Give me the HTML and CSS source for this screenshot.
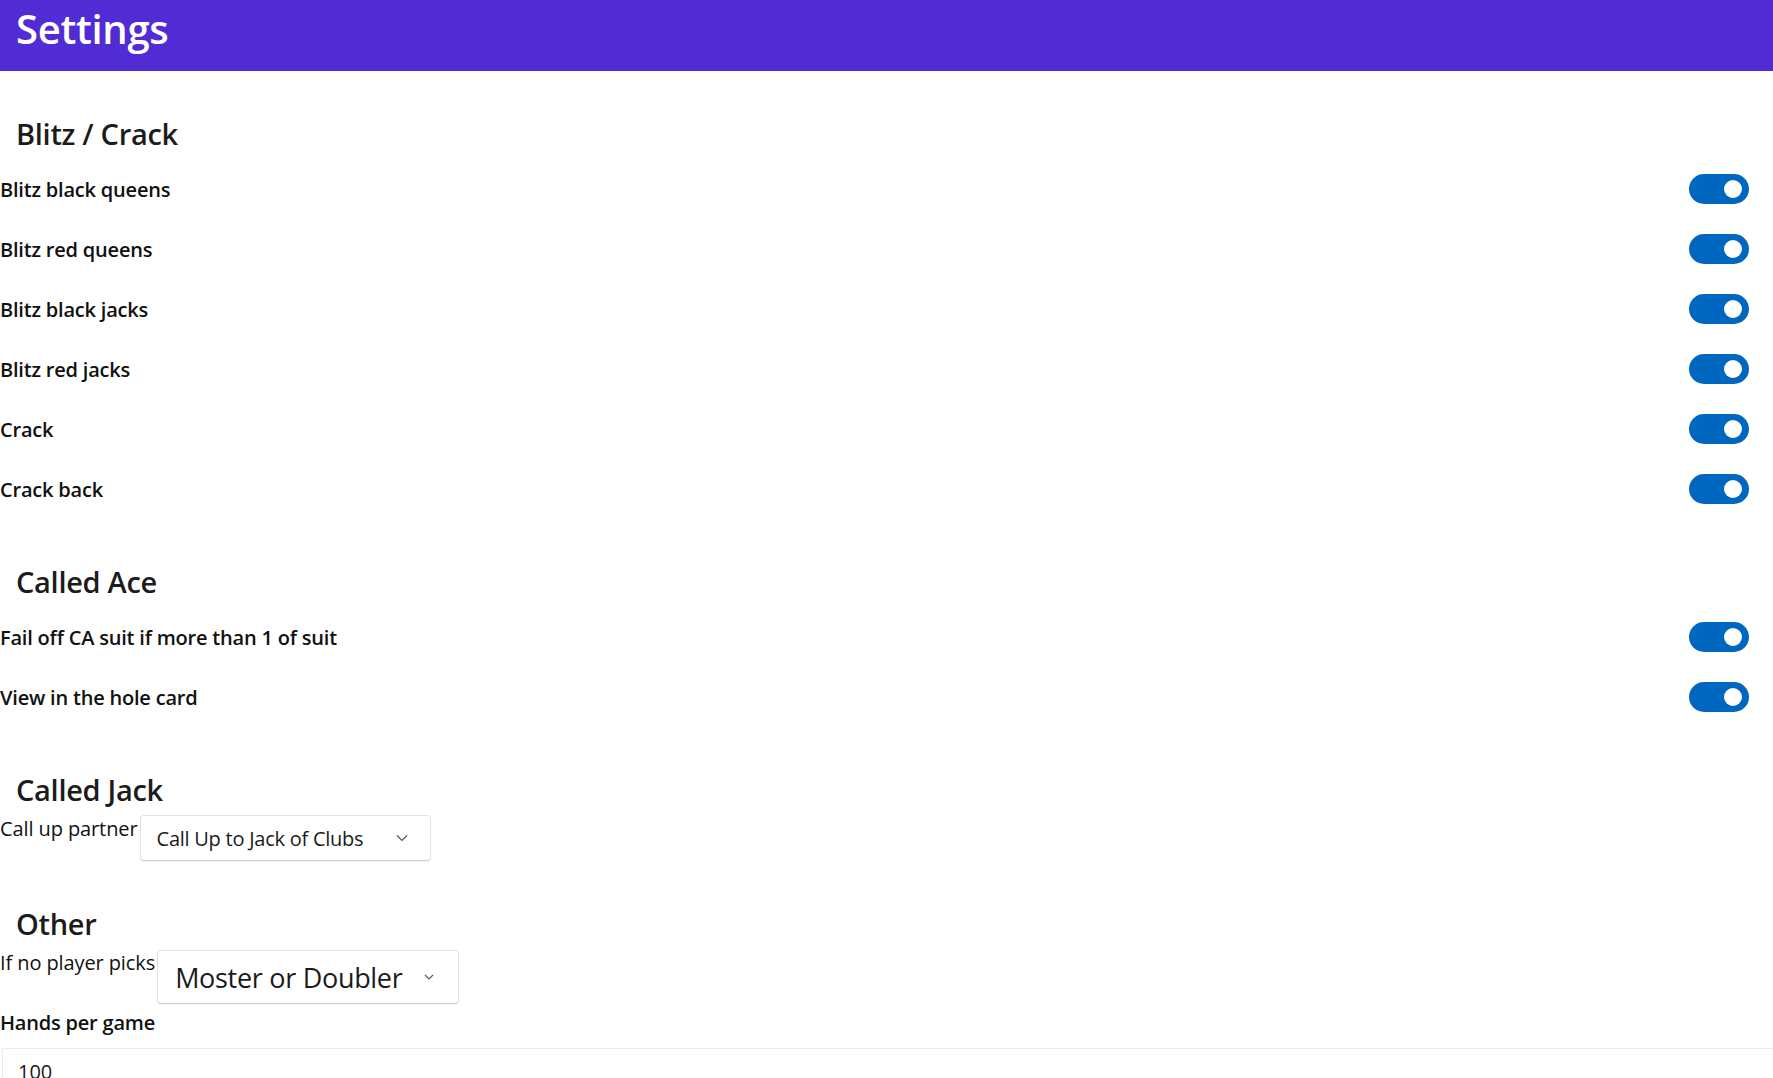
FILE: index.html
```html
<!DOCTYPE html>
<html lang="en">
  <head>
    <meta charset="UTF-8" />
    <meta name="viewport" content="width=device-width, initial-scale=1.0" />
    <title>Settings</title>
    <link rel="stylesheet" href="styles.css">
  </head>
  <body>
    <div id="titlebar"><h1>Settings</h1></div>

    <div class="group">
      <h2>Blitz / Crack</h2>
      <div class="row">
        <span class="label">Blitz black queens</span>
        <span class="switch"><span class="knob"></span></span>
      </div>
      <div class="row">
        <span class="label">Blitz red queens</span>
        <span class="switch"><span class="knob"></span></span>
      </div>
      <div class="row">
        <span class="label">Blitz black jacks</span>
        <span class="switch"><span class="knob"></span></span>
      </div>
      <div class="row">
        <span class="label">Blitz red jacks</span>
        <span class="switch"><span class="knob"></span></span>
      </div>
      <div class="row">
        <span class="label">Crack</span>
        <span class="switch"><span class="knob"></span></span>
      </div>
      <div class="row">
        <span class="label">Crack back</span>
        <span class="switch"><span class="knob"></span></span>
      </div>
    </div>

    <div class="group">
      <h2>Called Ace</h2>
      <div class="row">
        <span class="label">Fail off CA suit if more than 1 of suit</span>
        <span class="switch"><span class="knob"></span></span>
      </div>
      <div class="row">
        <span class="label">View in the hole card</span>
        <span class="switch"><span class="knob"></span></span>
      </div>
    </div>

    <div class="group">
      <h2>Called Jack</h2>
      <div class="picker-row">
        <span class="plain">Call up partner</span>
        <button class="picker" id="partner">
          <span>Call Up to Jack of Clubs</span>
          <svg width="12" height="8" viewBox="0 0 12 8"><polyline points="1,1.5 6,6.5 11,1.5" fill="none" stroke="#555" stroke-width="1.2"/></svg>
        </button>
      </div>
    </div>

    <div class="group">
      <h2>Other</h2>
      <div class="picker-row">
        <span class="plain">If no player picks</span>
        <button class="picker big" id="nopick">
          <span>Moster or Doubler</span>
          <svg width="10" height="6" viewBox="0 0 10 6"><polyline points="1,1 5,5 9,1" fill="none" stroke="#555" stroke-width="1.1"/></svg>
        </button>
      </div>
      <div class="label hands">Hands per game</div>
      <input class="entry" type="text" value="100" />
    </div>
  </body>
</html>
```

FILE: styles.css
```css
* {
  margin: 0;
  padding: 0;
  box-sizing: border-box;
}

body {
  font-family: "Open Sans", "Noto Sans", sans-serif;
  background-color: #ffffff;
  color: #111111;
  overflow: hidden;
}

#titlebar {
  background-color: #512bd4;
  height: 71px;
  padding: 2px 16px 0;
}

#titlebar h1 {
  color: #ffffff;
  font-size: 40px;
  font-weight: 600;
  line-height: 54px;
  letter-spacing: -0.3px;
}

.group h2 {
  font-size: 29px;
  font-weight: 600;
  line-height: 40px;
  letter-spacing: -0.3px;
  color: #1c1c1c;
  margin: 43px 0 5px;
  padding-left: 16px;
}

.row {
  display: flex;
  justify-content: space-between;
  align-items: center;
  height: 60px;
  padding-right: 24px;
}

.label {
  font-size: 20px;
  font-weight: 600;
  line-height: 28px;
  letter-spacing: -0.2px;
  padding-top: 2px;
}

.switch {
  display: flex;
  align-items: center;
  justify-content: flex-end;
  width: 60px;
  height: 30px;
  padding-right: 7px;
  border-radius: 15px;
  background-color: #0067c0;
}

.knob {
  width: 18px;
  height: 18px;
  border-radius: 50%;
  background-color: #ffffff;
}

.picker-row {
  display: flex;
  align-items: flex-start;
  margin-bottom: 2px;
}

.plain {
  font-size: 20px;
  line-height: 28px;
  letter-spacing: -0.1px;
  padding-right: 2px;
}

.picker {
  display: flex;
  align-items: center;
  justify-content: space-between;
  height: 46px;
  width: 291px;
  padding: 0 22px 0 16px;
  font-family: inherit;
  font-size: 20px;
  letter-spacing: -0.25px;
  color: #1a1a1a;
  background-color: #ffffff;
  border: 1px solid #e3e3e3;
  border-bottom-color: #cfcfcf;
  border-radius: 4px;
  box-shadow: 0 1px 1px rgba(0, 0, 0, 0.04);
}

.picker.big {
  height: 54px;
  width: 302px;
  margin-top: 1px;
  padding: 0 24px 0 17px;
  font-size: 27px;
  letter-spacing: -0.3px;
}

.hands {
  padding-top: 3px;
}

.entry {
  display: block;
  width: 100%;
  height: 46px;
  margin: 11px 0 0 2px;
  padding: 0 15px;
  font-family: inherit;
  font-size: 20px;
  color: #1a1a1a;
  border: 1px solid #ececec;
  border-right: none;
  outline: none;
}
```
